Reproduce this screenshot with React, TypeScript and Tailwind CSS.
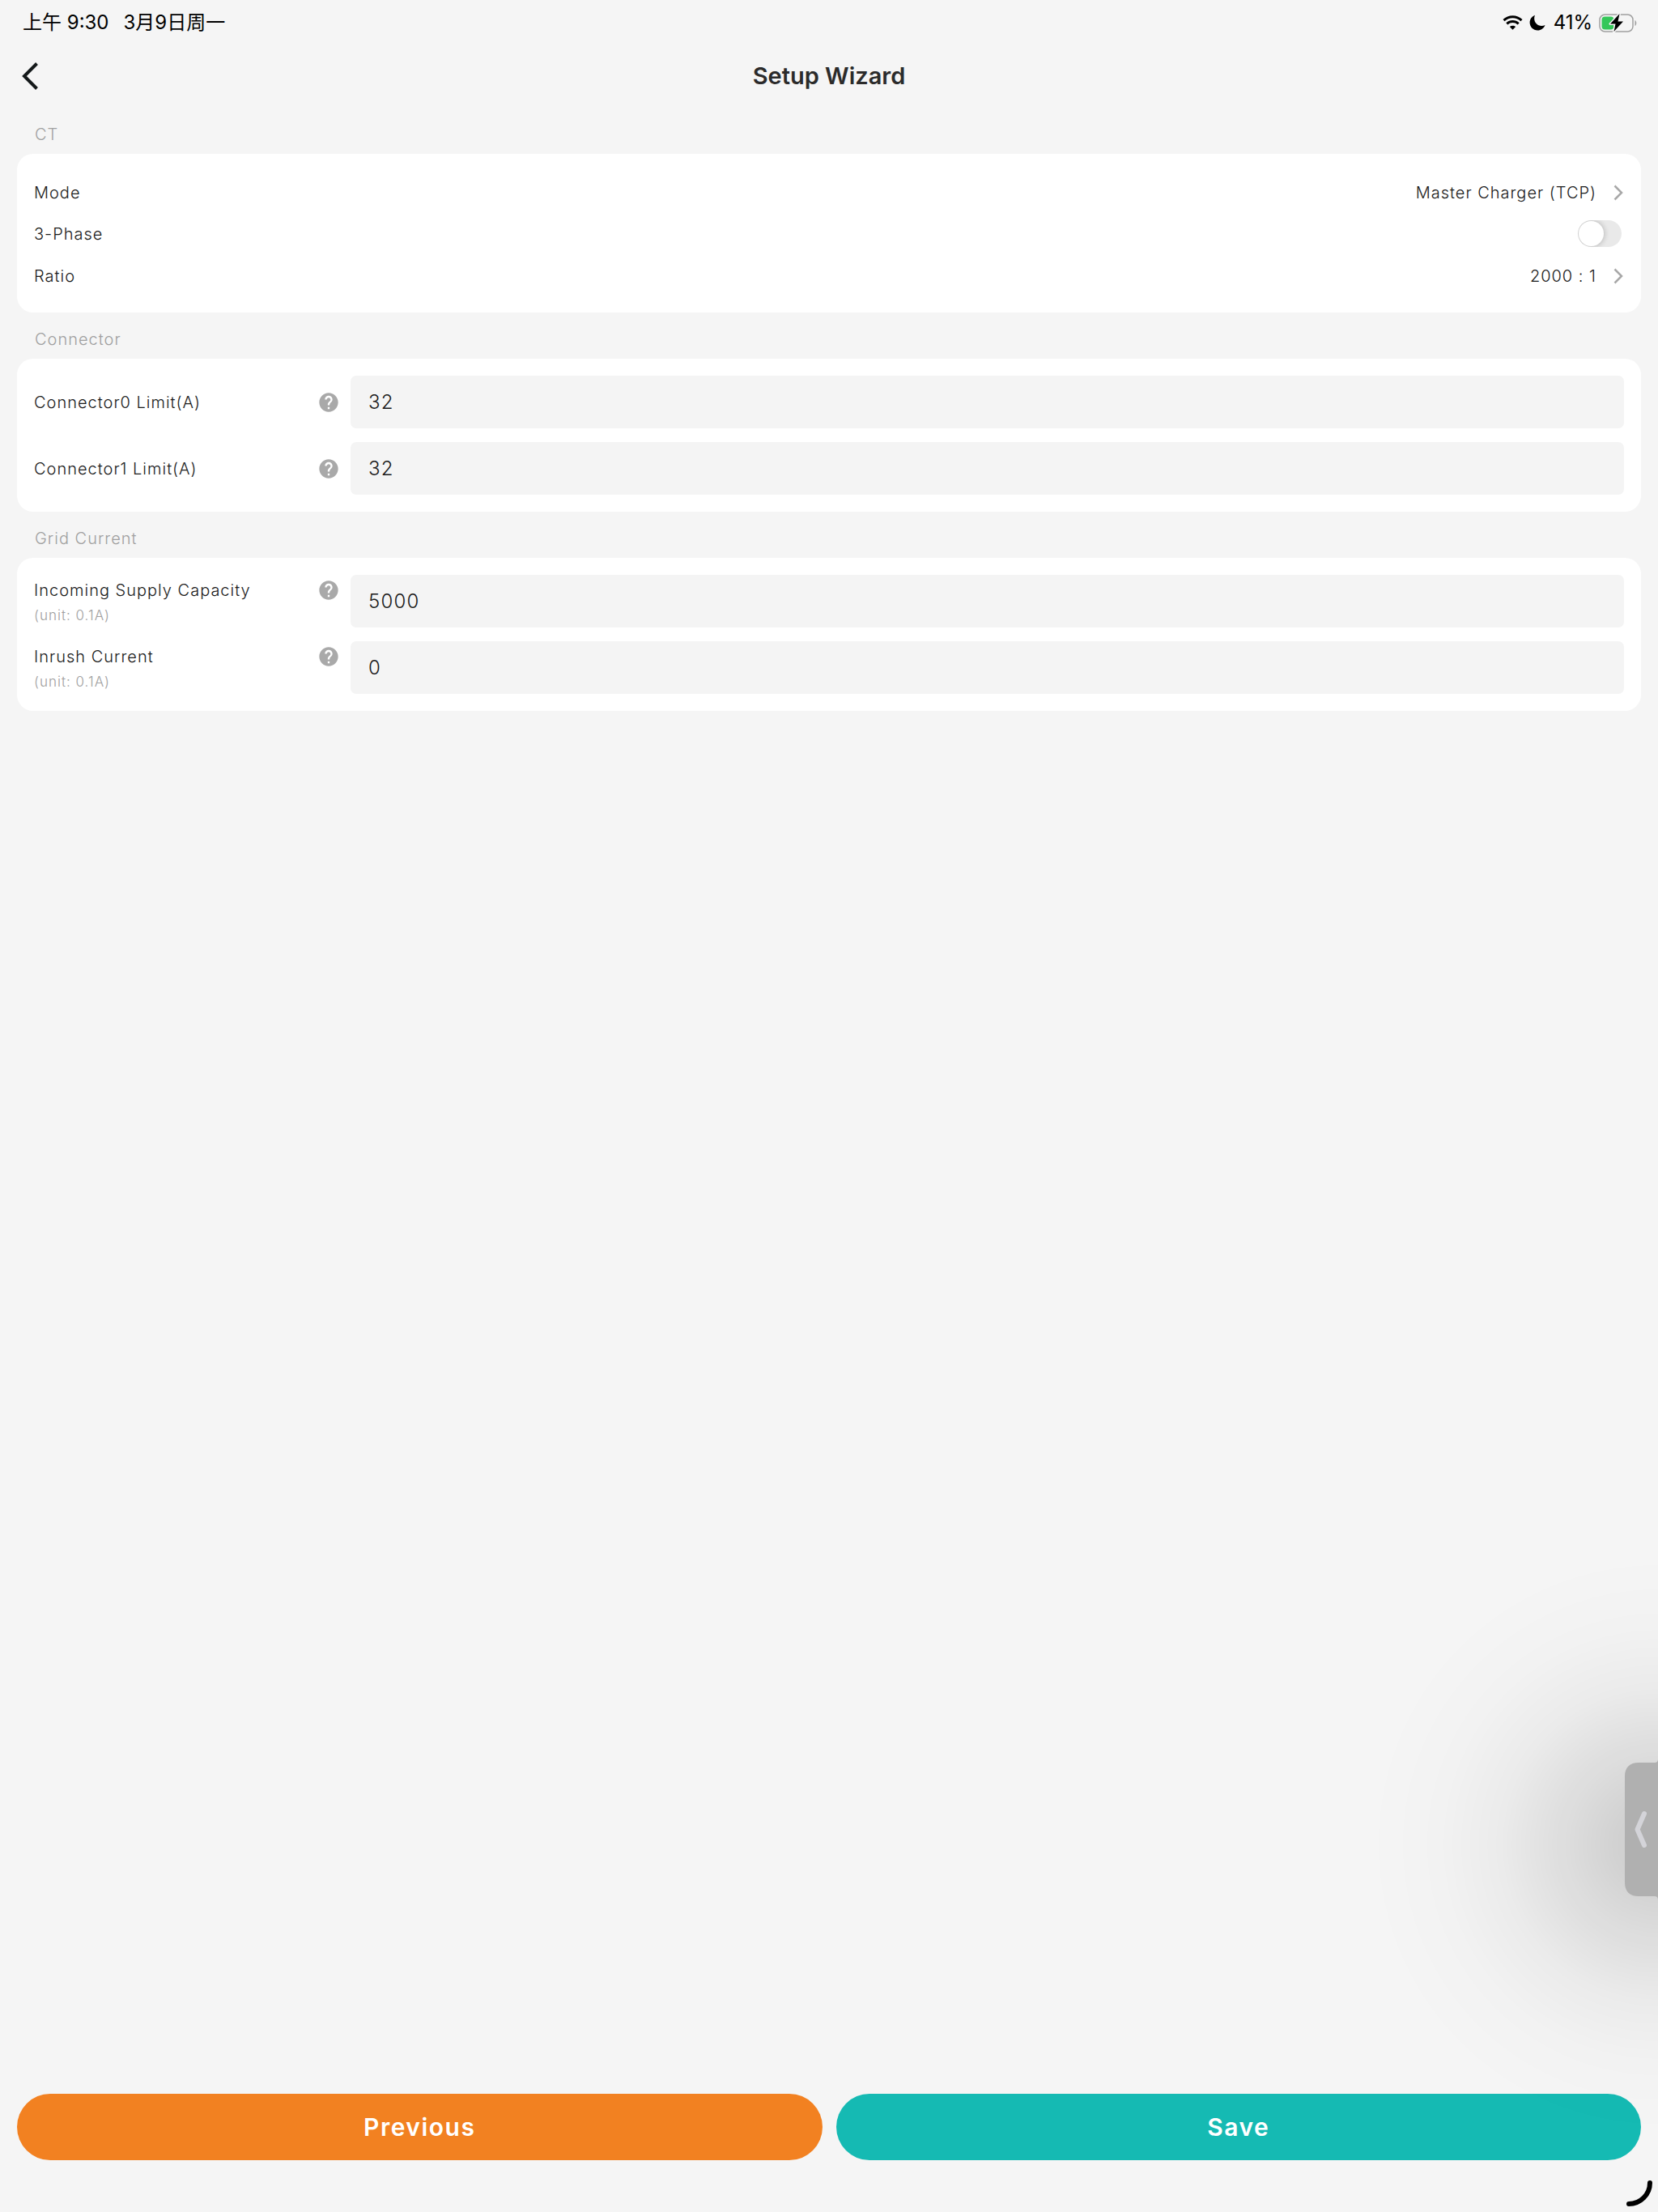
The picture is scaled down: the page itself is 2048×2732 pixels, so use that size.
import { useState } from "react";
import { MdHelp } from "react-icons/md";

const StatusBar = () => {
  return (
    <div className="flex h-[54px] items-center justify-between pt-px pl-7 pr-[25px] text-2xl text-black">
      <div className="flex gap-[18px]">
        <span>上午 9:30</span>
        <span>3月9日周一</span>
      </div>
      <div className="flex items-center">
        <svg viewBox="0 0 25 18" className="w-[25px] h-[18px]">
          <path
            d="M1.5 6.2C7.8.3 17.2.3 23.5 6.2M5.3 10.3c4.2-3.8 10.2-3.8 14.4 0"
            fill="none"
            stroke="currentColor"
            strokeWidth="3"
          />
          <path
            d="M12.5 17.8 8.8 14.1c2.2-1.9 5.2-1.9 7.4 0z"
            fill="currentColor"
          />
        </svg>
        <svg viewBox="0 0 20 20" className="ml-2 w-5 h-5">
          <path
            d="M7 .7A10.2 10.2 0 0 0 6.2 5c0 5 4 8.9 9 8.9 1.5 0 2.9-.3 4.3-.9C18 17 14.5 19.5 10.3 19.5 4.9 19.5.6 15.2.6 9.8.6 5.7 3.2 2.2 7 .7z"
            fill="currentColor"
          />
        </svg>
        <span className="ml-2.5">41%</span>
        <svg viewBox="0 0 48 24" className="ml-2 w-12 h-6">
          <rect
            x="1"
            y="2"
            width="41"
            height="21"
            rx="6.5"
            fill="none"
            stroke="#a0a0a0"
            strokeWidth="1.5"
          />
          <path d="M44.5 9v7c2.4-1.2 2.4-5.8 0-7z" fill="#a0a0a0" />
          <rect x="3.5" y="4.5" width="15" height="16" rx="4" fill="#34c759" />
          <path
            d="M25.5 1 14 13.5h6.5L18.5 23 30 10.5h-6.5z"
            fill="currentColor"
            stroke="#f5f5f5"
            strokeWidth="3"
            strokeLinejoin="round"
            paintOrder="stroke"
          />
        </svg>
      </div>
    </div>
  );
};

const Header = () => {
  return (
    <header className="grid h-[79px] grid-cols-[1fr_auto_1fr] items-center px-6">
      <button type="button" aria-label="Back" className="w-10 cursor-pointer">
        <svg viewBox="0 0 40 40" className="block w-10 h-10">
          <path
            d="M21.5 4.5 6 20l15.5 15.5"
            fill="none"
            stroke="#14191a"
            strokeWidth="4"
          />
        </svg>
      </button>
      <h1 className="text-[29px] font-semibold text-[#2b2b2b]">Setup Wizard</h1>
    </header>
  );
};

const Section = ({ title, children }: any) => {
  return (
    <section>
      <h2 className="flex h-[57px] items-center pt-2 pl-[22px] text-[#a0a0a0]">
        {title}
      </h2>
      <div className="rounded-[20px] bg-white p-[21px]">{children}</div>
    </section>
  );
};

const LinkRow = ({ label, value }: any) => {
  return (
    <button
      type="button"
      className="flex h-[51px] w-full cursor-pointer items-center pt-0.5"
    >
      <span className="grow text-left">{label}</span>
      <span>{value}</span>
      <svg viewBox="0 0 12 20" className="ml-[21px] mr-px w-3 h-5">
        <path
          d="M1.5 1.5 10 10l-8.5 8.5"
          fill="none"
          stroke="#a8a8a8"
          strokeWidth="2.5"
        />
      </svg>
    </button>
  );
};

const SwitchRow = ({ label }: any) => {
  const [checked, setChecked] = useState(false);

  return (
    <label className="flex h-[52px] cursor-pointer items-center justify-between pt-px pr-[3px]">
      {label}
      <input
        type="checkbox"
        role="switch"
        checked={checked}
        onChange={() => setChecked(!checked)}
        className="h-[33px] w-[54px] cursor-pointer appearance-none overflow-hidden rounded-full bg-[#e9e9e9] p-px before:block before:size-[31px] before:rounded-full before:bg-white before:shadow-[0_0_6px_1px_rgba(0,0,0,0.2)] checked:bg-[#15bab3] checked:before:ml-auto"
      />
    </label>
  );
};

const Field = ({ id, label, unit, defaultValue }: any) => {
  return (
    <div className="flex">
      <div className="flex w-[391px] shrink-0 justify-between pr-[13px]">
        <label htmlFor={id} className={unit ? "" : "flex items-center"}>
          <span className={unit ? "block leading-[38px]" : ""}>{label}</span>
          {unit && (
            <span className="block text-[17px] leading-6 text-[#a0a0a0]">
              {unit}
            </span>
          )}
        </label>
        <button
          type="button"
          aria-label={`About ${label}`}
          className={`flex cursor-pointer items-center text-[28px] text-[#a9a9a9] ${
            unit ? "h-[38px]" : ""
          }`}
        >
          <MdHelp />
        </button>
      </div>
      <input
        id={id}
        type="text"
        inputMode="numeric"
        defaultValue={defaultValue}
        className="h-[65px] min-w-0 grow rounded-[7px] bg-[#f4f4f4] px-[22px] text-2xl tracking-wider outline-none"
      />
    </div>
  );
};

/* System side tab over the right edge of the window */
const SideTab = () => {
  return (
    <>
      <div className="pointer-events-none fixed right-0 bottom-[94px] h-[720px] w-[360px] bg-[radial-gradient(360px_360px_at_100%_50%,rgba(0,0,0,0.17)_0%,rgba(0,0,0,0.14)_15%,rgba(0,0,0,0.09)_34%,rgba(0,0,0,0.04)_54%,rgba(0,0,0,0.012)_75%,transparent_100%)]"></div>
      <button
        type="button"
        aria-label="Open side panel"
        className="fixed right-0 bottom-[385px] cursor-pointer"
      >
        <svg viewBox="0 0 41 175" className="block w-[41px] h-[175px]">
          <path
            d="M41 0c0 4-1.5 5-5 5H17C6 5 0 11 0 22v131c0 11 6 17 17 17h19c3.5 0 5 1 5 5z"
            fill="#b0b0b0"
          />
          <path
            d="M24 68 15.5 87.5 24 107"
            fill="none"
            stroke="#d4d4d9"
            strokeWidth="6"
            strokeLinecap="round"
            strokeLinejoin="round"
          />
        </svg>
      </button>
      <svg
        viewBox="0 0 36 36"
        className="pointer-events-none fixed right-1 bottom-1 w-9 h-9"
      >
        <path
          d="M30 4A26 26 0 0 1 4 30"
          fill="none"
          stroke="#000"
          strokeWidth="6"
          strokeLinecap="round"
        />
      </svg>
    </>
  );
};

const App = () => {
  return (
    <div className="flex min-h-screen flex-col bg-[#f5f5f5] font-[Inter,'Noto_Sans_CJK_SC',sans-serif] text-[#1a1a1a]">
      <StatusBar />
      <Header />
      <main className="grow px-[21px] text-xl font-light tracking-wider">
        <Section title="CT">
          <LinkRow label="Mode" value="Master Charger (TCP)" />
          <SwitchRow label="3-Phase" />
          <LinkRow label="Ratio" value="2000 : 1" />
        </Section>
        <Section title="Connector">
          <div className="grid gap-[17px]">
            <Field id="connector0" label="Connector0 Limit(A)" defaultValue="32" />
            <Field id="connector1" label="Connector1 Limit(A)" defaultValue="32" />
          </div>
        </Section>
        <Section title="Grid Current">
          <div className="grid gap-[17px]">
            <Field
              id="capacity"
              label="Incoming Supply Capacity"
              unit="(unit: 0.1A)"
              defaultValue="5000"
            />
            <Field
              id="inrush"
              label="Inrush Current"
              unit="(unit: 0.1A)"
              defaultValue="0"
            />
          </div>
        </Section>
      </main>
      <footer className="grid grid-cols-2 gap-[17px] px-[21px] pb-16 text-[30px] font-semibold tracking-wider text-white">
        <button
          type="button"
          className="h-[82px] cursor-pointer rounded-full bg-[#f28121]"
        >
          Previous
        </button>
        <button
          type="button"
          className="h-[82px] cursor-pointer rounded-full bg-[#15bab3]"
        >
          Save
        </button>
      </footer>
      <SideTab />
    </div>
  );
};

export default App;
